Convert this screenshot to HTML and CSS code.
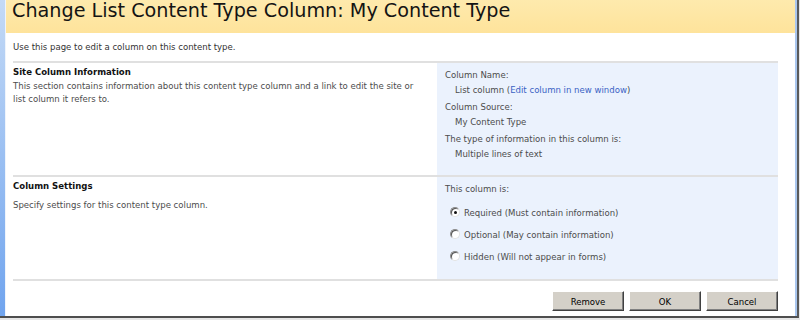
FILE: index.html
```html
<!DOCTYPE html>
<html>
<head>
<meta charset="utf-8">
<link rel="stylesheet" href="styles.css">
</head>
<body>
<div class="window">
  <div class="leftbar"></div>
  <div class="main">
    <div class="header">
      <h1 class="title">Change List Content Type Column: My Content Type</h1>
    </div>
    <div class="content">
      <p class="intro">Use this page to edit a column on this content type.</p>
      <div class="section section-info">
        <div class="sec-desc">
          <div class="sec-title">Site Column Information</div>
          <div class="sec-text">This section contains information about this content type column and a link to edit the site or list column it refers to.</div>
        </div>
        <div class="panel">
          <div class="group">
            <div class="label">Column Name:</div>
            <div class="value">List column (<a class="link" href="#">Edit column in new window</a>)</div>
          </div>
          <div class="group">
            <div class="label">Column Source:</div>
            <div class="value">My Content Type</div>
          </div>
          <div class="group">
            <div class="label">The type of information in this column is:</div>
            <div class="value">Multiple lines of text</div>
          </div>
        </div>
      </div>
      <div class="section section-settings">
        <div class="sec-desc">
          <div class="sec-title">Column Settings</div>
          <div class="sec-text spaced">Specify settings for this content type column.</div>
        </div>
        <div class="panel">
          <div class="label">This column is:</div>
          <div class="options">
            <label class="option"><span class="radio checked"></span>Required (Must contain information)</label>
            <label class="option"><span class="radio"></span>Optional (May contain information)</label>
            <label class="option"><span class="radio"></span>Hidden (Will not appear in forms)</label>
          </div>
        </div>
      </div>
      <div class="actions">
        <button class="btn">Remove</button>
        <button class="btn">OK</button>
        <button class="btn">Cancel</button>
      </div>
    </div>
  </div>
  <div class="rightbar"></div>
</div>
</body>
</html>
```
FILE: styles.css
```css
html, body {
  margin: 0;
  padding: 0;
}
body {
  width: 800px;
  height: 320px;
  overflow: hidden;
  background: #e6e6e6;
  font-family: "DejaVu Sans Condensed", "DejaVu Sans", sans-serif;
  font-size: 9.5px;
}
.window {
  display: flex;
  width: 797px;
  height: 316px;
  border-bottom: 2px solid #4e4e4e;
  border-right: 2px solid #5a5a5a;
  box-sizing: content-box;
}
.leftbar {
  width: 5px;
  background: linear-gradient(#c4daf6, #70a4ee);
  border-right: 1px solid #eef4fc;
}
.rightbar {
  width: 2px;
  background: #a9c6ee;
}
.main {
  flex: 1;
  display: flex;
  flex-direction: column;
  background: #fff;
}
.header {
  height: 33px;
  background: linear-gradient(#feeaad, #fee39b);
  padding-left: 6px;
}
.title {
  margin: 0;
  font-family: "DejaVu Sans", Verdana, sans-serif;
  font-weight: normal;
  font-size: 19.2px;
  line-height: 22px;
  color: #141414;
  white-space: nowrap;
}
.content {
  flex: 1;
  display: flex;
  flex-direction: column;
  padding: 0 17px 0 7px;
}
.intro {
  margin: 0;
  height: 28px;
  box-sizing: border-box;
  padding-top: 7px;
  line-height: 14px;
  color: #333;
}
.section {
  display: grid;
  grid-template-columns: 424px 1fr;
  border-top: 2px solid #e0e0e0;
  box-sizing: border-box;
}
.section-info {
  height: 114px;
}
.section-settings {
  height: 104px;
}
.sec-desc {
  padding: 2px 12px 0 0;
}
.sec-title {
  font-weight: bold;
  line-height: 14px;
  color: #111;
}
.sec-text {
  line-height: 13px;
  color: #4c4c4c;
}
.sec-text.spaced {
  margin-top: 5px;
}
.panel {
  background: #ebf2fd;
  padding: 4px 8px 0;
  color: #4c4c4c;
}
.group + .group {
  margin-top: 2px;
}
.label, .value {
  line-height: 15px;
}
.value {
  padding-left: 10px;
}
.link {
  color: #3a62c4;
  text-decoration: none;
}
.options {
  margin-top: 5px;
  padding-left: 5px;
}
.option {
  display: flex;
  align-items: center;
  gap: 4px;
  height: 22px;
}
.radio {
  width: 8px;
  height: 8px;
  border-radius: 50%;
  border: 1px solid;
  border-color: #8a8a8a #e2e2e2 #e2e2e2 #8a8a8a;
  background: #fff;
  box-shadow: inset 1px 1px 0 #555;
  position: relative;
}
.radio.checked::after {
  content: "";
  position: absolute;
  left: 3px;
  top: 3px;
  width: 3px;
  height: 3px;
  border-radius: 50%;
  background: #111;
}
.actions {
  flex: 1;
  display: flex;
  justify-content: flex-end;
  align-items: flex-start;
  gap: 5px;
  padding-top: 10px;
  border-top: 2px solid #e0e0e0;
}
.btn {
  width: 72px;
  height: 20px;
  padding: 0;
  background: #d4d0c8;
  border: 1px solid;
  border-color: #fff #404040 #404040 #fff;
  box-shadow: inset -1px -1px 0 #808080;
  font-family: "DejaVu Sans Condensed", "DejaVu Sans", sans-serif;
  font-size: 9.5px;
  color: #000;
}
```
